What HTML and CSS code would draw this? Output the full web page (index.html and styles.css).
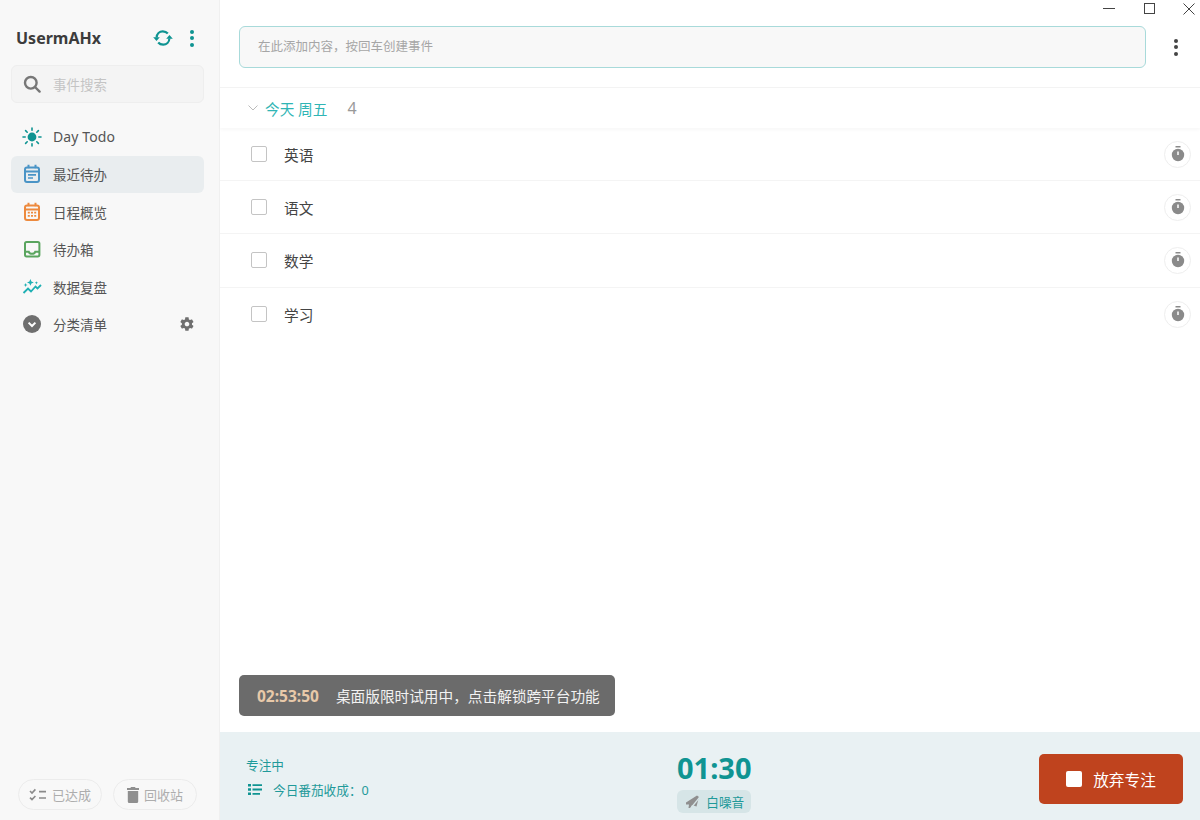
FILE: index.html
```html
<!DOCTYPE html>
<html lang="zh-CN">

<head>
    <meta charset="UTF-8">
    <title>Day Todo</title>
    <link rel="stylesheet" href="styles.css">
</head>

<body>
    <div class="app">
        <aside class="sidebar">
            <div class="userRow">
                <span class="userName">UsermAHx</span>
                <svg class="syncIcon" width="20" height="20" viewBox="0 0 20 20" fill="none" stroke="#0f9492" stroke-width="2.200">
                    <path d="M3.600 9.500C3.800 5.800 6.500 3.300 9.800 3.300c2.300 0 3.900 .9 5 2.200"/>
                    <path d="M16.400 10.500c-.2 3.700-2.900 6.200-6.200 6.200-2.300 0-3.900-.9-5-2.200"/>
                    <path d="M0.200 9.200h6.600l-3.300 3.800zM19.800 10.800h-6.600l3.300-3.800z" fill="#0f9492" stroke="none"/>
                </svg>
                <span class="dots tealDots"><i></i><i></i><i></i></span>
            </div>
            <div class="search">
                <svg width="18" height="18" viewBox="0 0 18 18" fill="none" stroke="#777" stroke-width="2.400">
                    <circle cx="7.800" cy="7.800" r="5.800"/>
                    <path d="M12 12l4.600 4.600" stroke-linecap="round"/>
                </svg>
                <span>事件搜索</span>
            </div>
            <nav class="nav">
                <div class="navItem">
                    <svg width="20" height="20" viewBox="0 0 20 20" fill="none" stroke="#0f9492" stroke-width="1.600" stroke-linecap="round">
                        <circle cx="10" cy="10" r="4.400" fill="#0f9492" stroke="none"/>
                        <path d="M10 1v2.200M10 16.800V19M1 10h2.200M16.800 10H19M3.600 3.600l1.600 1.600M14.800 14.800l1.600 1.600M3.600 16.400l1.600-1.600M14.800 5.200l1.600-1.600"/>
                    </svg>
                    <span class="navLatin">Day Todo</span>
                </div>
                <div class="navItem active">
                    <svg width="20" height="20" viewBox="0 0 20 20" fill="none" stroke="#4a94c6" stroke-width="2">
                        <rect x="3" y="3.400" width="14" height="14.600" rx="2"/>
                        <path d="M3 7.600h14M6.500 .8v3.400M13.500 .8v3.400"/>
                        <path d="M6 10.800h8M6 14h5" stroke-width="1.700"/>
                    </svg>
                    <span>最近待办</span>
                </div>
                <div class="navItem">
                    <svg width="20" height="20" viewBox="0 0 20 20" fill="none" stroke="#ed8a3e" stroke-width="2">
                        <rect x="3" y="3.400" width="14" height="14.600" rx="2"/>
                        <path d="M3 7.600h14M6.500 .8v3.400M13.500 .8v3.400"/>
                        <path d="M5.800 10.600h2M9 10.600h2M12.200 10.600h2M5.800 13.800h2M9 13.800h2M12.200 13.800h2" stroke-width="1.700"/>
                    </svg>
                    <span>日程概览</span>
                </div>
                <div class="navItem">
                    <svg width="20" height="20" viewBox="0 0 20 20" fill="none" stroke="#5aa55f" stroke-width="2">
                        <rect x="3" y="3" width="14.400" height="14.400" rx="1.600"/>
                        <path d="M3 12.800h3.800c.5 1.400 1.700 2 3.200 2s2.700-.6 3.200-2h4.200"/>
                    </svg>
                    <span>待办箱</span>
                </div>
                <div class="navItem">
                    <svg width="20" height="20" viewBox="0 0 20 20" fill="none" stroke="#1fb0b4" stroke-width="1.800">
                        <path d="M1.500 16l4.500-4.500 3 3 4.500-5 2 2 3.500-3.500"/>
                        <path d="M8.400 2l1 2.400 2.400 1-2.400 1-1 2.400-1-2.400-2.400-1 2.400-1zM3.600 6l.6 1.400 1.400 .6-1.400 .6-.6 1.400-.6-1.400L1.600 8l1.400-.6zM14.400 4.200l.5 1.100 1.100 .5-1.100 .5-.5 1.100-.5-1.100-1.100-.5 1.100-.5z" fill="#1fb0b4" stroke="none"/>
                    </svg>
                    <span>数据复盘</span>
                </div>
                <div class="navItem">
                    <svg width="20" height="20" viewBox="0 0 20 20">
                        <circle cx="10" cy="10" r="9" fill="#6f6f6f"/>
                        <path d="M6.600 8.600L10 12l3.400-3.400" fill="none" stroke="#fff" stroke-width="2"/>
                    </svg>
                    <span class="navGrow">分类清单</span>
                    <svg class="gear" width="16" height="16" viewBox="0 0 24 24" fill="#6f6f6f">
                        <path d="M19.400 13c.1-.3.1-.7.1-1s0-.7-.1-1l2.100-1.600c.2-.2.2-.4.1-.6l-2-3.500c-.1-.2-.4-.3-.6-.2l-2.500 1c-.5-.4-1.100-.7-1.700-1L14.400 2.400c0-.2-.2-.4-.5-.4h-4c-.2 0-.4.2-.5.4L9 5.100c-.6.2-1.200.6-1.700 1l-2.500-1c-.2-.1-.5 0-.6.2l-2 3.500c-.1.2-.1.4.1.6L4.400 11c0 .3-.1.7-.1 1s0 .7.1 1l-2.100 1.600c-.2.2-.2.4-.1.6l2 3.500c.1.2.4.3.6.2l2.500-1c.5.4 1.100.7 1.700 1l.4 2.700c0 .2.2.4.5.4h4c.2 0 .4-.2.5-.4l.4-2.700c.6-.2 1.200-.6 1.700-1l2.500 1c.2.1.5 0 .6-.2l2-3.500c.1-.2.1-.4-.1-.6zM12 15.500c-1.900 0-3.500-1.600-3.500-3.500s1.600-3.500 3.500-3.500 3.500 1.600 3.500 3.500-1.600 3.500-3.500 3.500z"/>
                    </svg>
                </div>
            </nav>
            <div class="sideFooter">
                <div class="pill">
                    <svg width="18" height="14" viewBox="0 0 18 14" fill="none" stroke="#8a8a8a" stroke-width="1.600">
                        <path d="M1 3l2 2 3.400-3.600M1 9.600l2 2 3.400-3.600M10 3.600h7M10 10h7"/>
                    </svg>
                    <span>已达成</span>
                </div>
                <div class="pill">
                    <svg width="12" height="16" viewBox="0 0 12 16" fill="#8f8f8f">
                        <path d="M4 0h4l.6 1H12v2H0V1h3.400zM.8 4h10.400v10.500c0 .8-.6 1.500-1.400 1.500H2.200C1.400 16 .8 15.300 .8 14.500z"/>
                    </svg>
                    <span>回收站</span>
                </div>
            </div>
        </aside>

        <main class="main">
            <div class="winBar">
                <svg width="12" height="12" viewBox="0 0 12 12" stroke="#444" fill="none"><path d="M0 5.500h12"/></svg>
                <svg width="12" height="12" viewBox="0 0 12 12" stroke="#444" fill="none"><rect x="1.500" y=".5" width="10" height="10"/></svg>
                <svg width="12" height="12" viewBox="0 0 12 12" stroke="#444" fill="none"><path d="M.5 .5l11 11M11.500 .5l-11 11"/></svg>
            </div>
            <div class="addRow">
                <div class="addInput">在此添加内容，按回车创建事件</div>
                <span class="dots darkDots"><i></i><i></i><i></i></span>
            </div>
            <div class="groupHead">
                <svg width="10" height="6" viewBox="0 0 10 6" fill="none" stroke="#bbb"><path d="M.5 .5L5 5 9.500 .5"/></svg>
                <span class="groupTitle">今天 周五</span>
                <span class="groupCount">4</span>
            </div>
            <div class="taskList">
                <div class="task">
                    <span class="check"></span>
                    <span class="taskName">英语</span>
                    <span class="timerBtn">
                        <svg width="14" height="16" viewBox="0 0 14 16"><path d="M4.500 0h5v1.500h-5z" fill="#8a8a8a"/><circle cx="7" cy="9" r="6.200" fill="#8a8a8a"/><path d="M7 5.500v3.500" stroke="#fff" stroke-width="1.500"/></svg>
                    </span>
                </div>
                <div class="task">
                    <span class="check"></span>
                    <span class="taskName">语文</span>
                    <span class="timerBtn">
                        <svg width="14" height="16" viewBox="0 0 14 16"><path d="M4.500 0h5v1.500h-5z" fill="#8a8a8a"/><circle cx="7" cy="9" r="6.200" fill="#8a8a8a"/><path d="M7 5.500v3.500" stroke="#fff" stroke-width="1.500"/></svg>
                    </span>
                </div>
                <div class="task">
                    <span class="check"></span>
                    <span class="taskName">数学</span>
                    <span class="timerBtn">
                        <svg width="14" height="16" viewBox="0 0 14 16"><path d="M4.500 0h5v1.500h-5z" fill="#8a8a8a"/><circle cx="7" cy="9" r="6.200" fill="#8a8a8a"/><path d="M7 5.500v3.500" stroke="#fff" stroke-width="1.500"/></svg>
                    </span>
                </div>
                <div class="task noLine">
                    <span class="check"></span>
                    <span class="taskName">学习</span>
                    <span class="timerBtn">
                        <svg width="14" height="16" viewBox="0 0 14 16"><path d="M4.500 0h5v1.500h-5z" fill="#8a8a8a"/><circle cx="7" cy="9" r="6.200" fill="#8a8a8a"/><path d="M7 5.500v3.500" stroke="#fff" stroke-width="1.500"/></svg>
                    </span>
                </div>
                <div class="toast">
                    <span class="toastTime">02:53:50</span>
                    <span>桌面版限时试用中，点击解锁跨平台功能</span>
                </div>
            </div>
            <footer class="focusBar">
                <div class="focusInfo">
                    <div>专注中</div>
                    <div class="focusCount">
                        <svg width="14" height="11" viewBox="0 0 14 11" fill="#0f9492">
                            <path d="M0 0h3v2.400H0zM0 4.300h3v2.400H0zM0 8.600h3V11H0zM4.500 .3H14v1.800H4.500zM4.500 4.600H14v1.800H4.500zM4.500 8.900H12v1.800H4.500z"/>
                        </svg>
                        <span>今日番茄收成：0</span>
                    </div>
                </div>
                <div class="focusTimer">
                    <div class="clock">01:30</div>
                    <div class="noiseTag">
                        <svg width="14" height="14" viewBox="0 0 14 14">
                            <path d="M0 7.500L11 .5l2 1.500-2.500 9.500-4.500-1.500-1.500 3H2.500l.5-3.500L0 9.500z" fill="#8f8f8f"/>
                            <path d="M13.500 2.500L4.500 13.500" stroke="#d6e5e7" stroke-width="1.200"/>
                        </svg>
                        <span>白噪音</span>
                    </div>
                </div>
                <div class="stopBtn">
                    <span class="stopSquare"></span>
                    <span>放弃专注</span>
                </div>
            </footer>
        </main>
    </div>
</body>

</html>
```

FILE: styles.css
```css
html,
body {
    padding: 0;
    margin: 0;
    height: 100%;
}

body {
    font-family: "Noto Sans", "Noto Sans CJK SC", sans-serif;
    color: #444;
    background: #fff;
    overflow: hidden;
}

.app {
    display: flex;
    width: 1200px;
    height: 820px;
}

/* 左侧栏 */
.sidebar {
    width: 220px;
    flex-shrink: 0;
    box-sizing: border-box;
    padding: 0 15px 10px 11px;
    background-color: #f8f8f8;
    border-right: 1px solid #f0f0f0;
    display: flex;
    flex-direction: column;
}

.userRow {
    display: flex;
    align-items: center;
    height: 76px;
    padding-left: 5px;
}

.userName {
    flex: 1;
    font-size: 16px;
    font-weight: 700;
    color: #3c3c3c;
}

.syncIcon {
    margin-right: 17px;
}

.dots {
    display: flex;
    flex-direction: column;
    gap: 2.500px;
    align-items: center;
    width: 4px;
}

.dots i {
    display: block;
    width: 4px;
    height: 4px;
    border-radius: 50%;
}

.tealDots {
    margin-right: 10px;
}

.tealDots i {
    background-color: #0f9492;
}

.darkDots i {
    background-color: #444;
}

.search {
    height: 38px;
    box-sizing: border-box;
    margin-top: -11px;
    padding-left: 11px;
    display: flex;
    align-items: center;
    gap: 12px;
    background-color: #f4f4f4;
    border: 1px solid #eee;
    border-radius: 6px;
    font-size: 13.500px;
    color: #c4c4c4;
}

.nav {
    margin-top: 15px;
    flex: 1;
}

.navItem {
    height: 37.500px;
    display: flex;
    align-items: center;
    gap: 11px;
    padding: 0 9px 0 11px;
    font-size: 13.500px;
    color: #555;
    border-radius: 6px;
}

.navItem.active {
    background-color: #e9edef;
}

.navLatin {
    font-size: 14px;
    letter-spacing: 0.100px;
}

.navGrow {
    flex: 1;
}

.sideFooter {
    display: flex;
    gap: 11px;
    padding-left: 7px;
}

.pill {
    height: 31px;
    box-sizing: border-box;
    width: 84px;
    display: flex;
    align-items: center;
    justify-content: center;
    gap: 5px;
    border: 1px solid #ececec;
    border-radius: 16px;
    font-size: 13px;
    color: #adadad;
}

/* 右侧主区 */
.main {
    flex: 1;
    min-width: 0;
    display: flex;
    flex-direction: column;
}

.winBar {
    height: 18px;
    display: flex;
    justify-content: flex-end;
    gap: 28px;
    padding: 3px 5px 0 0;
    box-sizing: border-box;
}

.addRow {
    display: flex;
    align-items: center;
    gap: 28px;
    margin-top: 8px;
    padding-left: 19px;
}

.addInput {
    width: 907px;
    height: 42px;
    box-sizing: border-box;
    line-height: 40px;
    padding-left: 18px;
    font-size: 12.500px;
    color: #a6a6a6;
    background-color: #f8f8f8;
    border: 1px solid #a8dada;
    border-radius: 6px;
}

.groupHead {
    margin-top: 19px;
    height: 41px;
    box-sizing: border-box;
    display: flex;
    align-items: center;
    padding-left: 28px;
    border-top: 1px solid #f3f3f3;
    box-shadow: 0 2px 3px rgba(0, 0, 0, 0.03);
}

.groupTitle {
    margin-left: 7px;
    font-size: 14.670px;
    color: #2fb5b5;
}

.groupCount {
    margin-left: 20px;
    font-size: 16px;
    color: #999;
}

.taskList {
    flex: 1;
    position: relative;
}

.task {
    height: 53.200px;
    box-sizing: border-box;
    display: flex;
    align-items: center;
    padding: 0 9px 0 31px;
    border-bottom: 1px solid #f4f4f4;
    font-size: 14.670px;
    color: #444;
}

.task.noLine {
    border-bottom: none;
}

.check {
    width: 16px;
    height: 16px;
    box-sizing: border-box;
    border: 1.500px solid #c4c4c4;
    border-radius: 2px;
}

.taskName {
    flex: 1;
    margin-left: 17px;
}

.timerBtn {
    width: 27px;
    height: 27px;
    box-sizing: border-box;
    display: flex;
    align-items: center;
    justify-content: center;
    border: 1px solid #eee;
    border-radius: 50%;
}

.toast {
    position: absolute;
    left: 19px;
    bottom: 16px;
    width: 376px;
    height: 41px;
    box-sizing: border-box;
    display: flex;
    align-items: center;
    gap: 17px;
    padding-left: 18px;
    background-color: #6b6b6b;
    border-radius: 5px;
    font-size: 14.670px;
    color: #f2f2f2;
}

.toastTime {
    font-size: 15.500px;
    font-weight: 700;
    color: #e8c9a9;
}

.focusBar {
    height: 88px;
    flex-shrink: 0;
    position: relative;
    display: flex;
    align-items: center;
    justify-content: space-between;
    padding: 0 17px 0 26px;
    background-color: #e9f1f3;
    color: #1f9a9a;
    font-size: 12.670px;
}

.focusInfo {
    display: flex;
    flex-direction: column;
    gap: 6px;
    margin-top: 2px;
}

.focusCount {
    display: flex;
    align-items: center;
    gap: 11px;
    padding-left: 2px;
}

.focusTimer {
    position: absolute;
    left: 457px;
    top: 17px;
    display: flex;
    flex-direction: column;
    align-items: center;
}

.clock {
    font-size: 29px;
    line-height: 38px;
    font-weight: 700;
    color: #0f9492;
}

.noiseTag {
    display: flex;
    align-items: center;
    gap: 6px;
    height: 23px;
    margin-top: 3px;
    padding: 0 0 0 9px;
    width: 74px;
    box-sizing: border-box;
    background-color: #d6e5e7;
    border-radius: 6px;
}

.stopBtn {
    width: 144px;
    height: 50px;
    margin-top: 6px;
    display: flex;
    align-items: center;
    justify-content: center;
    gap: 11px;
    background-color: #bf431e;
    border-radius: 5px;
    font-size: 15.700px;
    color: #fff;
}

.stopSquare {
    width: 16px;
    height: 16px;
    background-color: #fff;
    border-radius: 2px;
}
```
